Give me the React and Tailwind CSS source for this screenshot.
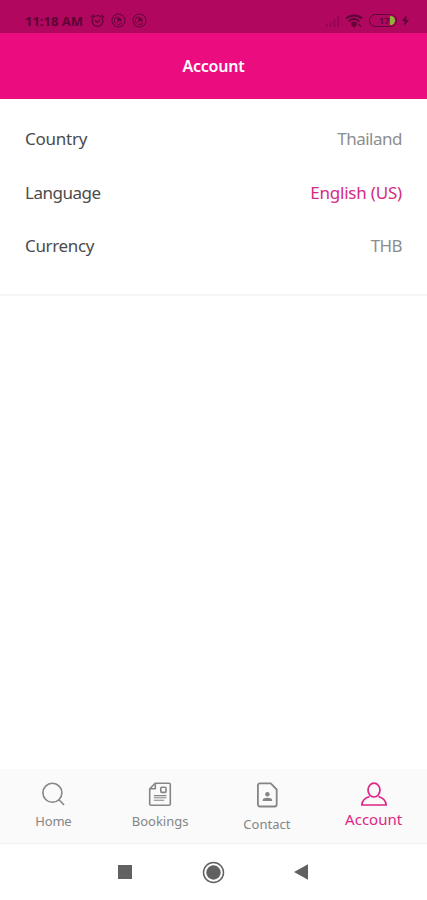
const settings = [
  { label: "Country", value: "Thailand", labelClass: "tracking-[-0.25px]", valueClass: "tracking-[-0.5px] text-[#8d8d8d]" },
  { label: "Language", value: "English (US)", labelClass: "tracking-[-0.5px]", valueClass: "tracking-[-0.2px] text-[#d42a84]" },
  { label: "Currency", value: "THB", labelClass: "tracking-[-0.35px]", valueClass: "tracking-[-0.6px] text-[#8d8d8d]" },
];

function AlarmIcon() {
  return (
    <svg width="15" height="15" viewBox="0 0 15 15" fill="none" stroke="currentColor" strokeWidth="1.2">
      <circle cx="7.5" cy="8" r="5.4" />
      <path d="M1 4.2 3.6 1.7M14 4.2l-2.6-2.5M4.8 7.2l2.5 2.2 3-2.8" />
    </svg>
  );
}

function RadarIcon() {
  return (
    <svg width="15" height="15" viewBox="0 0 15 15" fill="none" stroke="currentColor" strokeWidth="1">
      <circle cx="7.5" cy="7.5" r="6.5" />
      <path d="M4.4 10.4A4.2 4.2 0 0 1 6.4 3.6M6.5 11.4a4.2 4.2 0 0 0 4.3-1.6" />
      <path d="M6 4.6c2.6-.6 4.8 1 4.8 4.2L8.6 7.5 5.8 10l1-3z" fill="currentColor" stroke="none" />
    </svg>
  );
}

function StatusBar() {
  return (
    <div className="flex h-[33px] items-start bg-[#b1075f] pt-[13px] pr-[18px] pl-[25px] text-[#5c0535]">
      <span className="w-[59px] text-[13px] leading-4 font-bold whitespace-nowrap tracking-[0px]">11:18 AM</span>
      <div className="ml-[6px] flex gap-[6px]">
        <AlarmIcon />
        <RadarIcon />
        <RadarIcon />
      </div>
      <div className="ml-auto flex items-center">
        <svg width="15" height="15" viewBox="0 0 15 15" fill="#8c0650">
          <path d="M1 11h2v3H1zM4.7 9h2v5h-2zM8.4 6h2v8h-2zM12.1 3h2v11h-2z" opacity=".7" />
        </svg>
        <svg className="mr-px ml-[5px]" width="18" height="15" viewBox="0 0 18 15" fill="none" stroke="currentColor" strokeWidth="1.9">
          <path d="M1 5.5C5.8 1.4 12.2 1.4 17 5.5M3.7 8.3c3.2-2.7 7.4-2.7 10.6 0M6.3 10.8c1.7-1.3 3.7-1.3 5.4 0" />
          <path d="m7.2 11.8 1.8 2 1.8-2zM13.5 11l2.5 2.5" fill="currentColor" strokeWidth="1.2" />
        </svg>
        <div className="relative ml-[5px] h-[13px] w-[28px] overflow-hidden rounded-full border-[1.5px] border-current">
          <div className="absolute top-px right-px bottom-px w-[5px] rounded-r-full bg-[#90b43a]" />
          <span className="absolute top-0 left-[9px] text-[9px] leading-[11px] font-semibold">17</span>
        </div>
        <svg className="ml-[5px]" width="7" height="13" viewBox="0 0 7 13" fill="currentColor">
          <path d="M4.8 1 0 7h2.6L1.9 12 7 6H4.1z" />
        </svg>
      </div>
    </div>
  );
}

function SearchIcon() {
  return (
    <svg width="28" height="28" viewBox="0 0 28 28" fill="none" stroke="currentColor" strokeWidth="1.6">
      <circle cx="13.4" cy="12.8" r="9.5" />
      <path d="m20 19.8 5 5.2" />
    </svg>
  );
}

function BookingsIcon() {
  return (
    <svg width="28" height="28" viewBox="0 0 28 28" fill="none" stroke="currentColor" strokeWidth="1.6" strokeLinejoin="round">
      <path d="M9.2 3.3H23a1.3 1.3 0 0 1 1.3 1.3V24a1.3 1.3 0 0 1-1.3 1.3H5A1.3 1.3 0 0 1 3.7 24V8.8z" />
      <path d="M9.3 3.5v5.3H4" />
      <rect x="14.8" y="7.2" width="5.2" height="5.2" rx="1" />
      <path d="M7.8 15.6h12.6M7.8 17.8h12.6M7.8 20.2h10.4" strokeWidth="1.1" />
    </svg>
  );
}

function ContactIcon() {
  return (
    <svg width="28" height="28" viewBox="0 0 28 28" fill="none" stroke="currentColor" strokeWidth="1.8" strokeLinejoin="round">
      <path d="M6.9 3.3h10.8l6 6.2v15a2 2 0 0 1-2 2H6.9a2 2 0 0 1-2-2V5.3a2 2 0 0 1 2-2z" />
      <circle cx="14.4" cy="14.3" r="2.2" fill="currentColor" stroke="none" />
      <path d="M9.7 21v-1c0-3 9.4-3 9.4 0v1z" fill="currentColor" stroke="none" />
    </svg>
  );
}

function AccountIcon() {
  return (
    <svg width="28" height="28" viewBox="0 0 28 28" fill="none" stroke="currentColor" strokeWidth="1.7" strokeLinejoin="round">
      <ellipse cx="14" cy="10.1" rx="6" ry="6.9" />
      <path d="M9.6 16.5c-4.9 1.5-7.6 3.9-7.8 8.5h24.4c-.2-4.6-2.9-7-7.8-8.5" />
    </svg>
  );
}

function Tab({ icon, label, className = "text-[#858585]", labelClass }) {
  return (
    <div className={`flex flex-1 flex-col items-center ${className}`}>
      {icon}
      <span className={`whitespace-nowrap ${labelClass}`}>{label}</span>
    </div>
  );
}

export default function App() {
  return (
    <div className="flex h-[900px] w-full flex-col overflow-hidden bg-white font-['Noto_Sans',sans-serif]">
      <StatusBar />
      <header className="flex h-[66px] items-center justify-center bg-[#eb0c7f] text-white">
        <h1 className="text-[16px] font-semibold tracking-[-0.2px]">Account</h1>
      </header>

      {/* Locale settings */}
      <main className="flex-1">
        <div className="h-[197px] border-b-2 border-[#f5f5f5] px-[25px] pt-[13px]">
          {settings.map(({ label, value, labelClass, valueClass }) => (
            <div key={label} className="flex h-[53.5px] items-center justify-between text-[17px]">
              <span className={`text-[#4b4b4b] ${labelClass}`}>{label}</span>
              <span className={valueClass}>{value}</span>
            </div>
          ))}
        </div>
      </main>

      {/* Bottom tabs */}
      <nav className="flex h-[75px] border-b border-[#f1f1f1] bg-[#fafafa] pt-[11px]">
        <Tab icon={<SearchIcon />} label="Home" labelClass="mt-[4px] text-[13px] leading-[18px] tracking-[-0.2px]" />
        <Tab icon={<BookingsIcon />} label="Bookings" labelClass="mt-[4px] text-[13px] leading-[18px]" />
        <Tab icon={<ContactIcon />} label="Contact" labelClass="mt-[7px] text-[13px] leading-[18px]" />
        <Tab icon={<AccountIcon />} label="Account" className="text-[#dc2685]" labelClass="mt-[2px] text-[15px] leading-[18px]" />
      </nav>

      {/* System navigation */}
      <div className="flex h-[56px] items-center justify-center pr-[2px] text-[#616161]">
        <div className="h-[14px] w-[14px] bg-current" />
        <svg className="mr-[69px] ml-[70px]" width="23" height="23" viewBox="0 0 23 23" fill="none" stroke="currentColor" strokeWidth="1.5">
          <circle cx="11.5" cy="11.5" r="10" />
          <circle cx="11.5" cy="11.5" r="7.2" fill="currentColor" stroke="none" />
        </svg>
        <svg width="14" height="16" viewBox="0 0 14 16" fill="currentColor">
          <path d="M14 .3v15.4L0 8z" />
        </svg>
      </div>
    </div>
  );
}
